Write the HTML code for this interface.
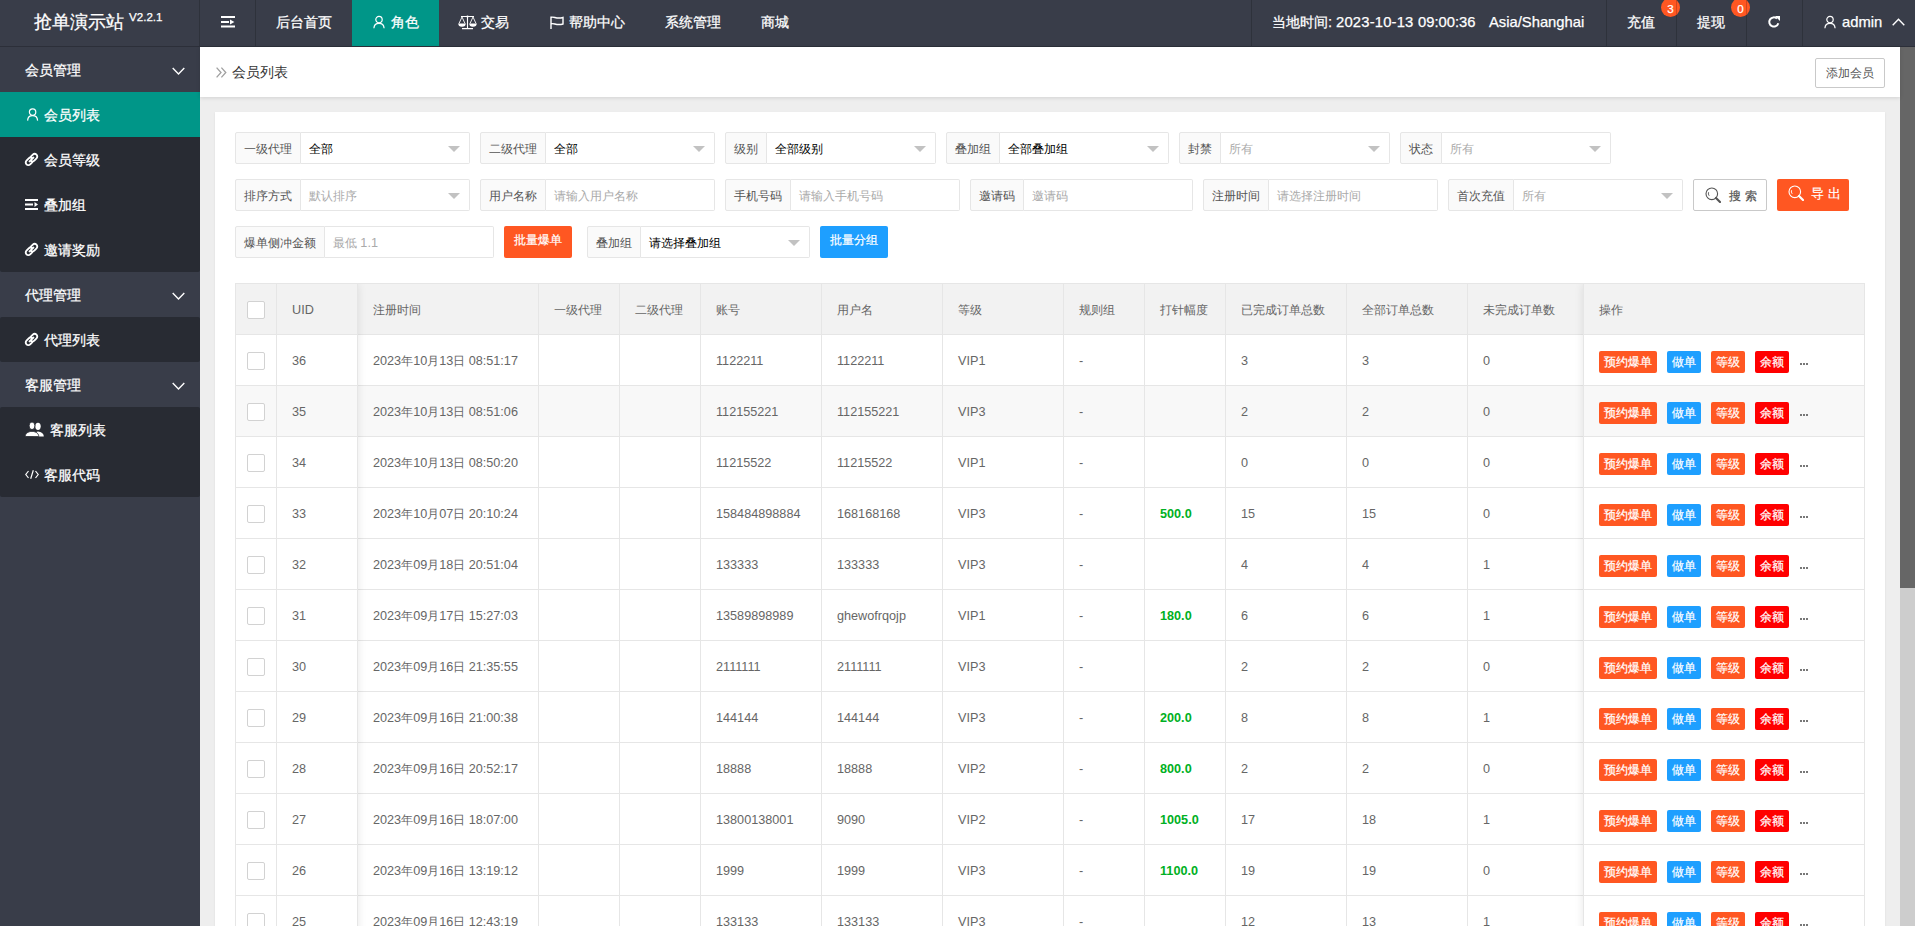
<!DOCTYPE html>
<html><head><meta charset="utf-8"><title>会员列表</title>
<style>
*{box-sizing:border-box;margin:0;padding:0}
html,body{width:1915px;height:926px;overflow:hidden}
body{position:relative;background:#eeeeee;font-family:"Liberation Sans",sans-serif;font-size:12px;color:#666}
.abs{position:absolute}
svg{display:block}
/* header */
.hd{position:absolute;left:0;top:0;width:1915px;height:47px;background:#393D49;color:#fff;font-size:14px;-webkit-text-stroke:0.25px #fff}
.hd .line{position:absolute;left:0;top:46px;width:1915px;height:1px;background:rgba(0,0,0,.22);z-index:3}
.hd .sep{position:absolute;top:0;width:1px;height:46px;background:rgba(0,0,0,.18)}
.hd .it{position:absolute;top:0;height:46px;line-height:46px;white-space:nowrap}
.hd .it .t{position:absolute;top:-1px}
.logo{position:absolute;left:34px;top:-1px;height:46px;line-height:46px;font-size:18px;color:#fff;white-space:nowrap}
.logo sup{font-size:11px;position:relative;top:3px;vertical-align:top;line-height:30px;margin-left:5px}
.badge{position:absolute;top:-2px;width:19px;height:19px;border-radius:50%;background:#FF5722;color:#fff;font-size:11px;line-height:22px;text-align:center}
/* sidebar */
.sd{position:absolute;left:0;top:47px;width:200px;height:879px;background:#393D49;color:#fff;font-size:14px;-webkit-text-stroke:0.25px #fff}
.sd .g{position:absolute;left:0;width:200px;height:45px;line-height:45px}
.sd .g .t{position:absolute;left:25px;top:1px}
.sd .sub{position:absolute;left:0;width:200px;background:#282B33;border-radius:2px}
.sd .si{position:absolute;left:0;width:200px;height:45px;line-height:45px}
.sd .si .t{position:absolute;left:44px;top:1px}
.sd .si svg{position:absolute}
.chev{position:absolute;left:172px;top:20px}
/* body */
.bc{position:absolute;left:200px;top:47px;width:1700px;height:50px;background:#fff;box-shadow:0 1px 4px rgba(0,0,0,.12);z-index:1}
.bc .t{position:absolute;left:32px;top:0;line-height:50px;font-size:14px;color:#333}
.btn-add{position:absolute;left:1615px;top:11px;width:70px;height:30px;border:1px solid #c9c9c9;border-radius:2px;background:#fff;color:#555;font-size:12px;line-height:28px;text-align:center}
.sb{position:absolute;left:1900px;top:47px;width:15px;height:879px;background:#cdcdcd}
.sb .th{position:absolute;left:0;top:0;width:15px;height:541px;background:#666}
.card{position:absolute;left:215px;top:112px;width:1670px;height:900px;background:#fff;box-shadow:0 1px 2px rgba(0,0,0,.08)}
/* form */
.fi{position:absolute;height:32px;display:flex}
.fi .lb{height:32px;border:1px solid #e6e6e6;background:#fafafa;border-radius:2px 0 0 2px;padding:0 8px;line-height:32px;color:#555;white-space:nowrap;font-size:12px}
.fi .ip{position:relative;width:169px;height:32px;border:1px solid #e6e6e6;border-left:0;border-radius:0 2px 2px 0;background:#fff;line-height:32px;padding-left:8px;color:#000;white-space:nowrap}
.fi .ip.ph{color:#aaa}
.fi .ip .ar{position:absolute;right:9px;top:13px;width:0;height:0;border-left:6px solid transparent;border-right:6px solid transparent;border-top:6px solid #c2c2c2}
.bt{position:absolute;height:32px;line-height:30px;text-align:center;color:#fff;border-radius:2px;font-size:12px;white-space:nowrap;-webkit-text-stroke-width:0.2px}
/* table */
.tb{position:absolute;left:235px;top:283px;width:1630px;height:700px;border:1px solid #e6e6e6;background:#fff;overflow:hidden}
.hr{position:absolute;left:0;top:0;width:1628px;height:51px;background:#f2f2f2;border-bottom:1px solid #e6e6e6}
.row{position:absolute;left:0;width:1628px;height:51px;border-bottom:1px solid #e6e6e6;background:#fff}
.row.hv{background:#f8f8f8}
.vl{position:absolute;top:0;width:1px;height:700px;background:#e6e6e6}
.c{position:absolute;top:1px;line-height:50px;white-space:nowrap;color:#666;font-size:12px}
.g5{color:#00b023;font-weight:bold}
.cb{position:absolute;left:11px;width:18px;height:18px;border:1px solid #d2d2d2;border-radius:2px;background:#fff}
.fixl{position:absolute;left:0;top:0;width:122px;height:700px;box-shadow:1px 0 8px rgba(0,0,0,.08);z-index:2}
.fixr{position:absolute;left:1347px;top:0;width:282px;height:700px;box-shadow:-1px 0 8px rgba(0,0,0,.08);z-index:2}
.ob{position:absolute;height:22px;line-height:22px;color:#fff;font-size:12px;text-align:center;border-radius:2px;white-space:nowrap;-webkit-text-stroke:0.2px #fff}
.n{font-size:1.055em}
</style></head>
<body>
<!-- HEADER -->
<div class="hd">
  <div class="logo">抢单演示站<sup><span class="n">V2.2.1</span></sup></div>
  <div class="sep" style="left:199px"></div>
  <div class="sep" style="left:255px"></div>
  <div class="it" style="left:200px;width:55px">
    <svg class="abs" style="left:21px;top:16px" width="14" height="12" viewBox="0 0 14 12"><rect x="0" y="0" width="14" height="2" fill="#fff"/><rect x="0" y="5" width="8" height="2" fill="#fff"/><path d="M9 3.6 L13.4 6 L9 8.4Z" fill="#fff"/><rect x="0" y="9.5" width="14" height="2" fill="#fff"/></svg>
  </div>
  <div class="it" style="left:256px;width:96px"><span class="t" style="left:20px">后台首页</span></div>
  <div class="it" style="left:352px;width:87px;background:#009688"><svg class="abs" style="left:21px;top:15px" width="12" height="14" viewBox="0 0 12 14"><circle cx="6" cy="4.6" r="3.2" fill="none" stroke="#fff" stroke-width="1.2"/><path d="M0.9 13.2 C1.1 9.9 3.1 8.3 6 8.3 C8.9 8.3 10.9 9.9 11.1 13.2" fill="none" stroke="#fff" stroke-width="1.2"/></svg><span class="t" style="left:39px">角色</span></div>
  <div class="it" style="left:439px;width:90px"><svg class="abs" style="left:19px;top:15px" width="19" height="15" viewBox="0 0 19 15"><path d="M3 1.5 H16 M9.5 1.5 V13.5 M4 13.6 H15" fill="none" stroke="#fff" stroke-width="1.1"/><circle cx="9.5" cy="1.5" r="1.1" fill="#fff"/><path d="M4 2 L1 8.5 M4 2 L7 8.5 M15 2 L12 8.5 M15 2 L18 8.5" fill="none" stroke="#fff" stroke-width="0.9"/><path d="M0.3 8.5 H7.7 A3.7 3.2 0 0 1 0.3 8.5Z M11.3 8.5 H18.7 A3.7 3.2 0 0 1 11.3 8.5Z" fill="#fff"/></svg><span class="t" style="left:42px">交易</span></div>
  <div class="it" style="left:529px;width:116px"><svg class="abs" style="left:21px;top:16px" width="14" height="13" viewBox="0 0 14 13"><path d="M1 0.5 V13 M1 1.5 C4 0 6 3.5 13 1.5 V8 C6 10 4 6.5 1 8" fill="none" stroke="#fff" stroke-width="1.4"/></svg><span class="t" style="left:40px">帮助中心</span></div>
  <div class="it" style="left:645px;width:96px"><span class="t" style="left:20px">系统管理</span></div>
  <div class="it" style="left:741px;width:68px"><span class="t" style="left:20px">商城</span></div>

  <div class="sep" style="left:1251px"></div>
  <div class="it" style="left:1252px;width:354px"><span class="t" style="left:20px">当地时间<span class="n">:</span></span><span class="t" style="left:84px;letter-spacing:0.2px"><span class="n">2023-10-13</span></span><span class="t" style="left:166px"><span class="n">09:00:36</span></span><span class="t" style="left:237px"><span class="n">Asia/Shanghai</span></span></div>
  <div class="sep" style="left:1606px"></div>
  <div class="it" style="left:1607px;width:69px"><span class="t" style="left:20px">充值</span><span class="badge" style="left:54px"><span class="n">3</span></span></div>
  <div class="sep" style="left:1676px"></div>
  <div class="it" style="left:1677px;width:69px"><span class="t" style="left:20px">提现</span><span class="badge" style="left:54px"><span class="n">0</span></span></div>
  <div class="sep" style="left:1746px"></div>
  <div class="it" style="left:1747px;width:55px"><svg class="abs" style="left:20px;top:15px" width="14" height="14" viewBox="0 0 14 14"><path d="M11.3 8.2 A4.6 4.6 0 1 1 10 3.6" fill="none" stroke="#fff" stroke-width="2"/><path d="M8 1 L13 1 L13 6 Z" fill="#fff"/></svg></div>
  <div class="sep" style="left:1802px"></div>
  <div class="it" style="left:1803px;width:112px"><svg class="abs" style="left:21px;top:15px" width="12" height="14" viewBox="0 0 12 14"><circle cx="6" cy="4.6" r="3.2" fill="none" stroke="#fff" stroke-width="1.2"/><path d="M0.9 13.2 C1.1 9.9 3.1 8.3 6 8.3 C8.9 8.3 10.9 9.9 11.1 13.2" fill="none" stroke="#fff" stroke-width="1.2"/></svg><span class="t" style="left:39px"><span class="n">admin</span></span><svg class="abs" style="left:89px;top:18px" width="13" height="8" viewBox="0 0 13 8"><path d="M0.7 7.3 L6.5 1.3 L12.3 7.3" fill="none" stroke="#fff" stroke-width="1.4"/></svg></div>
  <div class="line"></div>
</div>

<!-- SIDEBAR -->
<div class="sd">
<div class="g" style="top:0px"><span class="t">会员管理</span><svg class="chev" width="13" height="8" viewBox="0 0 13 8"><path d="M0.7 0.9 L6.5 6.9 L12.3 0.9" fill="none" stroke="#fff" stroke-width="1.4"/></svg></div>
<div class="sub" style="top:45px;height:180px"><div class="si" style="top:0px;background:#009688"><svg style="left:27px;top:16px" width="12" height="13" viewBox="0 0 12 13"><circle cx="5.6" cy="4.1" r="3.2" fill="none" stroke="#fff" stroke-width="1.2"/><path d="M0.6 12.6 C0.8 9.3 2.8 7.7 5.6 7.7 C8.4 7.7 10.4 9.3 10.6 12.6" fill="none" stroke="#fff" stroke-width="1.2"/></svg><span class="t" style="left:44px">会员列表</span></div><div class="si" style="top:45px"><svg style="left:24px;top:15px" width="15" height="15" viewBox="0 0 15 15"><path d="M6.6 4.9 L8.8 2.7 A2.6 2.6 0 0 1 12.5 6.4 L10.3 8.6 A2.6 2.6 0 0 1 7.1 9 M8.4 10.1 L6.2 12.3 A2.6 2.6 0 0 1 2.5 8.6 L4.7 6.4 A2.6 2.6 0 0 1 7.9 6 M5.6 9.4 L9.4 5.6" fill="none" stroke="#fff" stroke-width="1.9" stroke-linecap="round"/></svg><span class="t" style="left:44px">会员等级</span></div><div class="si" style="top:90px"><svg style="left:25px;top:17px" width="13" height="11" viewBox="0 0 13 11"><rect x="0" y="0" width="13" height="2" fill="#fff"/><rect x="0" y="4.5" width="8" height="2" fill="#fff"/><path d="M9.5 3 L13 5.5 L9.5 8Z" fill="#fff"/><rect x="0" y="9" width="13" height="2" fill="#fff"/></svg><span class="t" style="left:44px">叠加组</span></div><div class="si" style="top:135px"><svg style="left:24px;top:15px" width="15" height="15" viewBox="0 0 15 15"><path d="M6.6 4.9 L8.8 2.7 A2.6 2.6 0 0 1 12.5 6.4 L10.3 8.6 A2.6 2.6 0 0 1 7.1 9 M8.4 10.1 L6.2 12.3 A2.6 2.6 0 0 1 2.5 8.6 L4.7 6.4 A2.6 2.6 0 0 1 7.9 6 M5.6 9.4 L9.4 5.6" fill="none" stroke="#fff" stroke-width="1.9" stroke-linecap="round"/></svg><span class="t" style="left:44px">邀请奖励</span></div></div>
<div class="g" style="top:225px"><span class="t">代理管理</span><svg class="chev" width="13" height="8" viewBox="0 0 13 8"><path d="M0.7 0.9 L6.5 6.9 L12.3 0.9" fill="none" stroke="#fff" stroke-width="1.4"/></svg></div>
<div class="sub" style="top:270px;height:45px"><div class="si" style="top:0px"><svg style="left:24px;top:15px" width="15" height="15" viewBox="0 0 15 15"><path d="M6.6 4.9 L8.8 2.7 A2.6 2.6 0 0 1 12.5 6.4 L10.3 8.6 A2.6 2.6 0 0 1 7.1 9 M8.4 10.1 L6.2 12.3 A2.6 2.6 0 0 1 2.5 8.6 L4.7 6.4 A2.6 2.6 0 0 1 7.9 6 M5.6 9.4 L9.4 5.6" fill="none" stroke="#fff" stroke-width="1.9" stroke-linecap="round"/></svg><span class="t" style="left:44px">代理列表</span></div></div>
<div class="g" style="top:315px"><span class="t">客服管理</span><svg class="chev" width="13" height="8" viewBox="0 0 13 8"><path d="M0.7 0.9 L6.5 6.9 L12.3 0.9" fill="none" stroke="#fff" stroke-width="1.4"/></svg></div>
<div class="sub" style="top:360px;height:90px"><div class="si" style="top:0px"><svg style="left:25px;top:15px" width="19" height="15" viewBox="0 0 19 15"><ellipse cx="13" cy="4.3" rx="2.7" ry="3.6" fill="#fff"/><path d="M8.5 14.6 C8.6 11.4 10.4 9.9 13 9.6 C15.8 9.9 18.6 11.3 18.8 14.6 Z" fill="#fff"/><ellipse cx="7" cy="3.8" rx="2.9" ry="3.8" fill="#fff" stroke="#282B33" stroke-width="0.9"/><path d="M0.2 14.6 C0.4 11.2 2.8 9.7 7 9.3 C11.2 9.7 13.6 11.2 13.8 14.6 Z" fill="#fff" stroke="#282B33" stroke-width="0.9"/></svg><span class="t" style="left:50px">客服列表</span></div><div class="si" style="top:45px"><svg style="left:25px;top:18px" width="14" height="9" viewBox="0 0 14 9"><path d="M3.5 1 L0.8 4.5 L3.5 8 M10.5 1 L13.2 4.5 L10.5 8 M8.3 0.3 L5.7 8.7" fill="none" stroke="#fff" stroke-width="1.2"/></svg><span class="t" style="left:44px">客服代码</span></div></div>
</div>

<!-- BODY -->
<div class="bc">
  <svg class="abs" style="left:16px;top:20px" width="11" height="11" viewBox="0 0 11 11"><path d="M0.6 0.6 L5 5.5 L0.6 10.4 M5.4 0.6 L9.8 5.5 L5.4 10.4" fill="none" stroke="#a0a0a0" stroke-width="1.3"/></svg>
  <span class="t">会员列表</span>
  <div class="btn-add">添加会员</div>
</div>
<div class="sb"><div class="th"></div></div>
<div class="card"></div>

<div class="fi" style="left:235px;top:132px"><div class="lb">一级代理</div><div class="ip">全部<span class="ar"></span></div></div>
<div class="fi" style="left:480px;top:132px"><div class="lb">二级代理</div><div class="ip">全部<span class="ar"></span></div></div>
<div class="fi" style="left:725px;top:132px"><div class="lb">级别</div><div class="ip">全部级别<span class="ar"></span></div></div>
<div class="fi" style="left:946px;top:132px"><div class="lb">叠加组</div><div class="ip">全部叠加组<span class="ar"></span></div></div>
<div class="fi" style="left:1179px;top:132px"><div class="lb">封禁</div><div class="ip ph">所有<span class="ar"></span></div></div>
<div class="fi" style="left:1400px;top:132px"><div class="lb">状态</div><div class="ip ph">所有<span class="ar"></span></div></div>
<div class="fi" style="left:235px;top:179px"><div class="lb">排序方式</div><div class="ip ph">默认排序<span class="ar"></span></div></div>
<div class="fi" style="left:480px;top:179px"><div class="lb">用户名称</div><div class="ip ph">请输入用户名称</div></div>
<div class="fi" style="left:725px;top:179px"><div class="lb">手机号码</div><div class="ip ph">请输入手机号码</div></div>
<div class="fi" style="left:970px;top:179px"><div class="lb">邀请码</div><div class="ip ph">邀请码</div></div>
<div class="fi" style="left:1203px;top:179px"><div class="lb">注册时间</div><div class="ip ph">请选择注册时间</div></div>
<div class="fi" style="left:1448px;top:179px"><div class="lb">首次充值</div><div class="ip ph">所有<span class="ar"></span></div></div>
<div class="bt" style="left:1693px;top:179px;width:74px;border:1px solid #c9c9c9;background:#fff;color:#555"><svg style="position:absolute;left:11px;top:7px" width="16" height="16" viewBox="0 0 16 16"><circle cx="6.8" cy="6.8" r="5.8" fill="none" stroke="#555" stroke-width="1.1"/><path d="M3.6 5.2 A3.6 3.6 0 0 0 4.2 8.8" fill="none" stroke="#555" stroke-width="0.9"/><path d="M11 11 L15 15" stroke="#555" stroke-width="2.2" stroke-linecap="round"/></svg><span style="position:absolute;left:35px;top:1px;letter-spacing:3.5px">搜索</span></div>
<div class="bt" style="left:1777px;top:179px;width:72px;background:#FF5722"><svg style="position:absolute;left:11px;top:6px" width="16" height="16" viewBox="0 0 16 16"><circle cx="6.8" cy="6.8" r="5.8" fill="none" stroke="#fff" stroke-width="1.1"/><path d="M3.6 5.2 A3.6 3.6 0 0 0 4.2 8.8" fill="none" stroke="#fff" stroke-width="0.9"/><path d="M11 11 L15 15" stroke="#fff" stroke-width="2.2" stroke-linecap="round"/></svg><span style="position:absolute;left:34px;top:0px;letter-spacing:4px;font-size:13px">导出</span></div>
<div class="fi" style="left:235px;top:226px"><div class="lb">爆单侧冲金额</div><div class="ip ph">最低 <span class="n">1.1</span></div></div>
<div class="bt" style="left:504px;top:226px;width:68px;background:#FF5722;line-height:28px">批量爆单</div>
<div class="fi" style="left:587px;top:226px"><div class="lb">叠加组</div><div class="ip">请选择叠加组<span class="ar"></span></div></div>
<div class="bt" style="left:820px;top:226px;width:68px;background:#1E9FFF;line-height:28px">批量分组</div>

<div class="tb">
<div class="hr">
<span class="c" style="left:56px"><span class="n">UID</span></span>
<span class="c" style="left:137px">注册时间</span>
<span class="c" style="left:318px">一级代理</span>
<span class="c" style="left:399px">二级代理</span>
<span class="c" style="left:480px">账号</span>
<span class="c" style="left:601px">用户名</span>
<span class="c" style="left:722px">等级</span>
<span class="c" style="left:843px">规则组</span>
<span class="c" style="left:924px">打针幅度</span>
<span class="c" style="left:1005px">已完成订单总数</span>
<span class="c" style="left:1126px">全部订单总数</span>
<span class="c" style="left:1247px">未完成订单数</span>
<span class="c" style="left:1363px">操作</span>
</div>
<div class="row" style="top:51px"><span class="c" style="left:56px"><span class="n">36</span></span><span class="c" style="left:137px"><span class="n">2023</span>年<span class="n">10</span>月<span class="n">13</span>日 <span class="n">08:51:17</span></span><span class="c" style="left:480px"><span class="n">1122211</span></span><span class="c" style="left:601px"><span class="n">1122211</span></span><span class="c" style="left:722px"><span class="n">VIP1</span></span><span class="c" style="left:843px"><span class="n">-</span></span><span class="c" style="left:1005px"><span class="n">3</span></span><span class="c" style="left:1126px"><span class="n">3</span></span><span class="c" style="left:1247px"><span class="n">0</span></span></div>
<div class="row hv" style="top:102px"><span class="c" style="left:56px"><span class="n">35</span></span><span class="c" style="left:137px"><span class="n">2023</span>年<span class="n">10</span>月<span class="n">13</span>日 <span class="n">08:51:06</span></span><span class="c" style="left:480px"><span class="n">112155221</span></span><span class="c" style="left:601px"><span class="n">112155221</span></span><span class="c" style="left:722px"><span class="n">VIP3</span></span><span class="c" style="left:843px"><span class="n">-</span></span><span class="c" style="left:1005px"><span class="n">2</span></span><span class="c" style="left:1126px"><span class="n">2</span></span><span class="c" style="left:1247px"><span class="n">0</span></span></div>
<div class="row" style="top:153px"><span class="c" style="left:56px"><span class="n">34</span></span><span class="c" style="left:137px"><span class="n">2023</span>年<span class="n">10</span>月<span class="n">13</span>日 <span class="n">08:50:20</span></span><span class="c" style="left:480px"><span class="n">11215522</span></span><span class="c" style="left:601px"><span class="n">11215522</span></span><span class="c" style="left:722px"><span class="n">VIP1</span></span><span class="c" style="left:843px"><span class="n">-</span></span><span class="c" style="left:1005px"><span class="n">0</span></span><span class="c" style="left:1126px"><span class="n">0</span></span><span class="c" style="left:1247px"><span class="n">0</span></span></div>
<div class="row" style="top:204px"><span class="c" style="left:56px"><span class="n">33</span></span><span class="c" style="left:137px"><span class="n">2023</span>年<span class="n">10</span>月<span class="n">07</span>日 <span class="n">20:10:24</span></span><span class="c" style="left:480px"><span class="n">158484898884</span></span><span class="c" style="left:601px"><span class="n">168168168</span></span><span class="c" style="left:722px"><span class="n">VIP3</span></span><span class="c" style="left:843px"><span class="n">-</span></span><span class="c g5" style="left:924px"><span class="n">500.0</span></span><span class="c" style="left:1005px"><span class="n">15</span></span><span class="c" style="left:1126px"><span class="n">15</span></span><span class="c" style="left:1247px"><span class="n">0</span></span></div>
<div class="row" style="top:255px"><span class="c" style="left:56px"><span class="n">32</span></span><span class="c" style="left:137px"><span class="n">2023</span>年<span class="n">09</span>月<span class="n">18</span>日 <span class="n">20:51:04</span></span><span class="c" style="left:480px"><span class="n">133333</span></span><span class="c" style="left:601px"><span class="n">133333</span></span><span class="c" style="left:722px"><span class="n">VIP3</span></span><span class="c" style="left:843px"><span class="n">-</span></span><span class="c" style="left:1005px"><span class="n">4</span></span><span class="c" style="left:1126px"><span class="n">4</span></span><span class="c" style="left:1247px"><span class="n">1</span></span></div>
<div class="row" style="top:306px"><span class="c" style="left:56px"><span class="n">31</span></span><span class="c" style="left:137px"><span class="n">2023</span>年<span class="n">09</span>月<span class="n">17</span>日 <span class="n">15:27:03</span></span><span class="c" style="left:480px"><span class="n">13589898989</span></span><span class="c" style="left:601px"><span class="n">ghewofrqojp</span></span><span class="c" style="left:722px"><span class="n">VIP1</span></span><span class="c" style="left:843px"><span class="n">-</span></span><span class="c g5" style="left:924px"><span class="n">180.0</span></span><span class="c" style="left:1005px"><span class="n">6</span></span><span class="c" style="left:1126px"><span class="n">6</span></span><span class="c" style="left:1247px"><span class="n">1</span></span></div>
<div class="row" style="top:357px"><span class="c" style="left:56px"><span class="n">30</span></span><span class="c" style="left:137px"><span class="n">2023</span>年<span class="n">09</span>月<span class="n">16</span>日 <span class="n">21:35:55</span></span><span class="c" style="left:480px"><span class="n">2111111</span></span><span class="c" style="left:601px"><span class="n">2111111</span></span><span class="c" style="left:722px"><span class="n">VIP3</span></span><span class="c" style="left:843px"><span class="n">-</span></span><span class="c" style="left:1005px"><span class="n">2</span></span><span class="c" style="left:1126px"><span class="n">2</span></span><span class="c" style="left:1247px"><span class="n">0</span></span></div>
<div class="row" style="top:408px"><span class="c" style="left:56px"><span class="n">29</span></span><span class="c" style="left:137px"><span class="n">2023</span>年<span class="n">09</span>月<span class="n">16</span>日 <span class="n">21:00:38</span></span><span class="c" style="left:480px"><span class="n">144144</span></span><span class="c" style="left:601px"><span class="n">144144</span></span><span class="c" style="left:722px"><span class="n">VIP3</span></span><span class="c" style="left:843px"><span class="n">-</span></span><span class="c g5" style="left:924px"><span class="n">200.0</span></span><span class="c" style="left:1005px"><span class="n">8</span></span><span class="c" style="left:1126px"><span class="n">8</span></span><span class="c" style="left:1247px"><span class="n">1</span></span></div>
<div class="row" style="top:459px"><span class="c" style="left:56px"><span class="n">28</span></span><span class="c" style="left:137px"><span class="n">2023</span>年<span class="n">09</span>月<span class="n">16</span>日 <span class="n">20:52:17</span></span><span class="c" style="left:480px"><span class="n">18888</span></span><span class="c" style="left:601px"><span class="n">18888</span></span><span class="c" style="left:722px"><span class="n">VIP2</span></span><span class="c" style="left:843px"><span class="n">-</span></span><span class="c g5" style="left:924px"><span class="n">800.0</span></span><span class="c" style="left:1005px"><span class="n">2</span></span><span class="c" style="left:1126px"><span class="n">2</span></span><span class="c" style="left:1247px"><span class="n">0</span></span></div>
<div class="row" style="top:510px"><span class="c" style="left:56px"><span class="n">27</span></span><span class="c" style="left:137px"><span class="n">2023</span>年<span class="n">09</span>月<span class="n">16</span>日 <span class="n">18:07:00</span></span><span class="c" style="left:480px"><span class="n">13800138001</span></span><span class="c" style="left:601px"><span class="n">9090</span></span><span class="c" style="left:722px"><span class="n">VIP2</span></span><span class="c" style="left:843px"><span class="n">-</span></span><span class="c g5" style="left:924px"><span class="n">1005.0</span></span><span class="c" style="left:1005px"><span class="n">17</span></span><span class="c" style="left:1126px"><span class="n">18</span></span><span class="c" style="left:1247px"><span class="n">1</span></span></div>
<div class="row" style="top:561px"><span class="c" style="left:56px"><span class="n">26</span></span><span class="c" style="left:137px"><span class="n">2023</span>年<span class="n">09</span>月<span class="n">16</span>日 <span class="n">13:19:12</span></span><span class="c" style="left:480px"><span class="n">1999</span></span><span class="c" style="left:601px"><span class="n">1999</span></span><span class="c" style="left:722px"><span class="n">VIP3</span></span><span class="c" style="left:843px"><span class="n">-</span></span><span class="c g5" style="left:924px"><span class="n">1100.0</span></span><span class="c" style="left:1005px"><span class="n">19</span></span><span class="c" style="left:1126px"><span class="n">19</span></span><span class="c" style="left:1247px"><span class="n">0</span></span></div>
<div class="row" style="top:612px"><span class="c" style="left:56px"><span class="n">25</span></span><span class="c" style="left:137px"><span class="n">2023</span>年<span class="n">09</span>月<span class="n">16</span>日 <span class="n">12:43:19</span></span><span class="c" style="left:480px"><span class="n">133133</span></span><span class="c" style="left:601px"><span class="n">133133</span></span><span class="c" style="left:722px"><span class="n">VIP3</span></span><span class="c" style="left:843px"><span class="n">-</span></span><span class="c" style="left:1005px"><span class="n">12</span></span><span class="c" style="left:1126px"><span class="n">13</span></span><span class="c" style="left:1247px"><span class="n">1</span></span></div>
<div class="vl" style="left:40px"></div>
<div class="vl" style="left:121px"></div>
<div class="vl" style="left:302px"></div>
<div class="vl" style="left:383px"></div>
<div class="vl" style="left:464px"></div>
<div class="vl" style="left:585px"></div>
<div class="vl" style="left:706px"></div>
<div class="vl" style="left:827px"></div>
<div class="vl" style="left:908px"></div>
<div class="vl" style="left:989px"></div>
<div class="vl" style="left:1110px"></div>
<div class="vl" style="left:1231px"></div>
<div class="vl" style="left:1347px"></div>
<div class="fixl">
<div style="position:absolute;left:0;top:0;width:122px;height:51px;background:#f2f2f2;border-bottom:1px solid #e6e6e6"><span class="cb" style="top:17px"></span><span class="c" style="left:56px"><span class="n">UID</span></span><div class="vl" style="left:40px"></div><div class="vl" style="left:121px"></div></div>
<div style="position:absolute;left:0;top:51px;width:122px;height:51px;background:#fff;border-bottom:1px solid #e6e6e6"><span class="cb" style="top:17px"></span><span class="c" style="left:56px"><span class="n">36</span></span><div class="vl" style="left:40px"></div><div class="vl" style="left:121px"></div></div>
<div style="position:absolute;left:0;top:102px;width:122px;height:51px;background:#f8f8f8;border-bottom:1px solid #e6e6e6"><span class="cb" style="top:17px"></span><span class="c" style="left:56px"><span class="n">35</span></span><div class="vl" style="left:40px"></div><div class="vl" style="left:121px"></div></div>
<div style="position:absolute;left:0;top:153px;width:122px;height:51px;background:#fff;border-bottom:1px solid #e6e6e6"><span class="cb" style="top:17px"></span><span class="c" style="left:56px"><span class="n">34</span></span><div class="vl" style="left:40px"></div><div class="vl" style="left:121px"></div></div>
<div style="position:absolute;left:0;top:204px;width:122px;height:51px;background:#fff;border-bottom:1px solid #e6e6e6"><span class="cb" style="top:17px"></span><span class="c" style="left:56px"><span class="n">33</span></span><div class="vl" style="left:40px"></div><div class="vl" style="left:121px"></div></div>
<div style="position:absolute;left:0;top:255px;width:122px;height:51px;background:#fff;border-bottom:1px solid #e6e6e6"><span class="cb" style="top:17px"></span><span class="c" style="left:56px"><span class="n">32</span></span><div class="vl" style="left:40px"></div><div class="vl" style="left:121px"></div></div>
<div style="position:absolute;left:0;top:306px;width:122px;height:51px;background:#fff;border-bottom:1px solid #e6e6e6"><span class="cb" style="top:17px"></span><span class="c" style="left:56px"><span class="n">31</span></span><div class="vl" style="left:40px"></div><div class="vl" style="left:121px"></div></div>
<div style="position:absolute;left:0;top:357px;width:122px;height:51px;background:#fff;border-bottom:1px solid #e6e6e6"><span class="cb" style="top:17px"></span><span class="c" style="left:56px"><span class="n">30</span></span><div class="vl" style="left:40px"></div><div class="vl" style="left:121px"></div></div>
<div style="position:absolute;left:0;top:408px;width:122px;height:51px;background:#fff;border-bottom:1px solid #e6e6e6"><span class="cb" style="top:17px"></span><span class="c" style="left:56px"><span class="n">29</span></span><div class="vl" style="left:40px"></div><div class="vl" style="left:121px"></div></div>
<div style="position:absolute;left:0;top:459px;width:122px;height:51px;background:#fff;border-bottom:1px solid #e6e6e6"><span class="cb" style="top:17px"></span><span class="c" style="left:56px"><span class="n">28</span></span><div class="vl" style="left:40px"></div><div class="vl" style="left:121px"></div></div>
<div style="position:absolute;left:0;top:510px;width:122px;height:51px;background:#fff;border-bottom:1px solid #e6e6e6"><span class="cb" style="top:17px"></span><span class="c" style="left:56px"><span class="n">27</span></span><div class="vl" style="left:40px"></div><div class="vl" style="left:121px"></div></div>
<div style="position:absolute;left:0;top:561px;width:122px;height:51px;background:#fff;border-bottom:1px solid #e6e6e6"><span class="cb" style="top:17px"></span><span class="c" style="left:56px"><span class="n">26</span></span><div class="vl" style="left:40px"></div><div class="vl" style="left:121px"></div></div>
<div style="position:absolute;left:0;top:612px;width:122px;height:51px;background:#fff;border-bottom:1px solid #e6e6e6"><span class="cb" style="top:17px"></span><span class="c" style="left:56px"><span class="n">25</span></span><div class="vl" style="left:40px"></div><div class="vl" style="left:121px"></div></div>
</div>
<div class="fixr">
<div style="position:absolute;left:0;top:0;width:282px;height:51px;background:#f2f2f2;border-bottom:1px solid #e6e6e6;border-left:1px solid #e6e6e6"><span class="c" style="left:15px">操作</span></div>
<div style="position:absolute;left:0;top:51px;width:282px;height:51px;background:#fff;border-bottom:1px solid #e6e6e6;border-left:1px solid #e6e6e6"><span class="ob" style="left:15px;top:16px;width:58px;background:#FF5722">预约爆单</span><span class="ob" style="left:83px;top:16px;width:34px;background:#1E9FFF">做单</span><span class="ob" style="left:127px;top:16px;width:34px;background:#FF5722">等级</span><span class="ob" style="left:171px;top:16px;width:34px;background:#FF0000">余额</span><span style="position:absolute;left:216px;top:28px;width:2px;height:2px;background:#777;box-shadow:3px 0 0 #777,6px 0 0 #777"></span></div>
<div style="position:absolute;left:0;top:102px;width:282px;height:51px;background:#f8f8f8;border-bottom:1px solid #e6e6e6;border-left:1px solid #e6e6e6"><span class="ob" style="left:15px;top:16px;width:58px;background:#FF5722">预约爆单</span><span class="ob" style="left:83px;top:16px;width:34px;background:#1E9FFF">做单</span><span class="ob" style="left:127px;top:16px;width:34px;background:#FF5722">等级</span><span class="ob" style="left:171px;top:16px;width:34px;background:#FF0000">余额</span><span style="position:absolute;left:216px;top:28px;width:2px;height:2px;background:#777;box-shadow:3px 0 0 #777,6px 0 0 #777"></span></div>
<div style="position:absolute;left:0;top:153px;width:282px;height:51px;background:#fff;border-bottom:1px solid #e6e6e6;border-left:1px solid #e6e6e6"><span class="ob" style="left:15px;top:16px;width:58px;background:#FF5722">预约爆单</span><span class="ob" style="left:83px;top:16px;width:34px;background:#1E9FFF">做单</span><span class="ob" style="left:127px;top:16px;width:34px;background:#FF5722">等级</span><span class="ob" style="left:171px;top:16px;width:34px;background:#FF0000">余额</span><span style="position:absolute;left:216px;top:28px;width:2px;height:2px;background:#777;box-shadow:3px 0 0 #777,6px 0 0 #777"></span></div>
<div style="position:absolute;left:0;top:204px;width:282px;height:51px;background:#fff;border-bottom:1px solid #e6e6e6;border-left:1px solid #e6e6e6"><span class="ob" style="left:15px;top:16px;width:58px;background:#FF5722">预约爆单</span><span class="ob" style="left:83px;top:16px;width:34px;background:#1E9FFF">做单</span><span class="ob" style="left:127px;top:16px;width:34px;background:#FF5722">等级</span><span class="ob" style="left:171px;top:16px;width:34px;background:#FF0000">余额</span><span style="position:absolute;left:216px;top:28px;width:2px;height:2px;background:#777;box-shadow:3px 0 0 #777,6px 0 0 #777"></span></div>
<div style="position:absolute;left:0;top:255px;width:282px;height:51px;background:#fff;border-bottom:1px solid #e6e6e6;border-left:1px solid #e6e6e6"><span class="ob" style="left:15px;top:16px;width:58px;background:#FF5722">预约爆单</span><span class="ob" style="left:83px;top:16px;width:34px;background:#1E9FFF">做单</span><span class="ob" style="left:127px;top:16px;width:34px;background:#FF5722">等级</span><span class="ob" style="left:171px;top:16px;width:34px;background:#FF0000">余额</span><span style="position:absolute;left:216px;top:28px;width:2px;height:2px;background:#777;box-shadow:3px 0 0 #777,6px 0 0 #777"></span></div>
<div style="position:absolute;left:0;top:306px;width:282px;height:51px;background:#fff;border-bottom:1px solid #e6e6e6;border-left:1px solid #e6e6e6"><span class="ob" style="left:15px;top:16px;width:58px;background:#FF5722">预约爆单</span><span class="ob" style="left:83px;top:16px;width:34px;background:#1E9FFF">做单</span><span class="ob" style="left:127px;top:16px;width:34px;background:#FF5722">等级</span><span class="ob" style="left:171px;top:16px;width:34px;background:#FF0000">余额</span><span style="position:absolute;left:216px;top:28px;width:2px;height:2px;background:#777;box-shadow:3px 0 0 #777,6px 0 0 #777"></span></div>
<div style="position:absolute;left:0;top:357px;width:282px;height:51px;background:#fff;border-bottom:1px solid #e6e6e6;border-left:1px solid #e6e6e6"><span class="ob" style="left:15px;top:16px;width:58px;background:#FF5722">预约爆单</span><span class="ob" style="left:83px;top:16px;width:34px;background:#1E9FFF">做单</span><span class="ob" style="left:127px;top:16px;width:34px;background:#FF5722">等级</span><span class="ob" style="left:171px;top:16px;width:34px;background:#FF0000">余额</span><span style="position:absolute;left:216px;top:28px;width:2px;height:2px;background:#777;box-shadow:3px 0 0 #777,6px 0 0 #777"></span></div>
<div style="position:absolute;left:0;top:408px;width:282px;height:51px;background:#fff;border-bottom:1px solid #e6e6e6;border-left:1px solid #e6e6e6"><span class="ob" style="left:15px;top:16px;width:58px;background:#FF5722">预约爆单</span><span class="ob" style="left:83px;top:16px;width:34px;background:#1E9FFF">做单</span><span class="ob" style="left:127px;top:16px;width:34px;background:#FF5722">等级</span><span class="ob" style="left:171px;top:16px;width:34px;background:#FF0000">余额</span><span style="position:absolute;left:216px;top:28px;width:2px;height:2px;background:#777;box-shadow:3px 0 0 #777,6px 0 0 #777"></span></div>
<div style="position:absolute;left:0;top:459px;width:282px;height:51px;background:#fff;border-bottom:1px solid #e6e6e6;border-left:1px solid #e6e6e6"><span class="ob" style="left:15px;top:16px;width:58px;background:#FF5722">预约爆单</span><span class="ob" style="left:83px;top:16px;width:34px;background:#1E9FFF">做单</span><span class="ob" style="left:127px;top:16px;width:34px;background:#FF5722">等级</span><span class="ob" style="left:171px;top:16px;width:34px;background:#FF0000">余额</span><span style="position:absolute;left:216px;top:28px;width:2px;height:2px;background:#777;box-shadow:3px 0 0 #777,6px 0 0 #777"></span></div>
<div style="position:absolute;left:0;top:510px;width:282px;height:51px;background:#fff;border-bottom:1px solid #e6e6e6;border-left:1px solid #e6e6e6"><span class="ob" style="left:15px;top:16px;width:58px;background:#FF5722">预约爆单</span><span class="ob" style="left:83px;top:16px;width:34px;background:#1E9FFF">做单</span><span class="ob" style="left:127px;top:16px;width:34px;background:#FF5722">等级</span><span class="ob" style="left:171px;top:16px;width:34px;background:#FF0000">余额</span><span style="position:absolute;left:216px;top:28px;width:2px;height:2px;background:#777;box-shadow:3px 0 0 #777,6px 0 0 #777"></span></div>
<div style="position:absolute;left:0;top:561px;width:282px;height:51px;background:#fff;border-bottom:1px solid #e6e6e6;border-left:1px solid #e6e6e6"><span class="ob" style="left:15px;top:16px;width:58px;background:#FF5722">预约爆单</span><span class="ob" style="left:83px;top:16px;width:34px;background:#1E9FFF">做单</span><span class="ob" style="left:127px;top:16px;width:34px;background:#FF5722">等级</span><span class="ob" style="left:171px;top:16px;width:34px;background:#FF0000">余额</span><span style="position:absolute;left:216px;top:28px;width:2px;height:2px;background:#777;box-shadow:3px 0 0 #777,6px 0 0 #777"></span></div>
<div style="position:absolute;left:0;top:612px;width:282px;height:51px;background:#fff;border-bottom:1px solid #e6e6e6;border-left:1px solid #e6e6e6"><span class="ob" style="left:15px;top:16px;width:58px;background:#FF5722">预约爆单</span><span class="ob" style="left:83px;top:16px;width:34px;background:#1E9FFF">做单</span><span class="ob" style="left:127px;top:16px;width:34px;background:#FF5722">等级</span><span class="ob" style="left:171px;top:16px;width:34px;background:#FF0000">余额</span><span style="position:absolute;left:216px;top:28px;width:2px;height:2px;background:#777;box-shadow:3px 0 0 #777,6px 0 0 #777"></span></div>
</div>
</div>

</body></html>
